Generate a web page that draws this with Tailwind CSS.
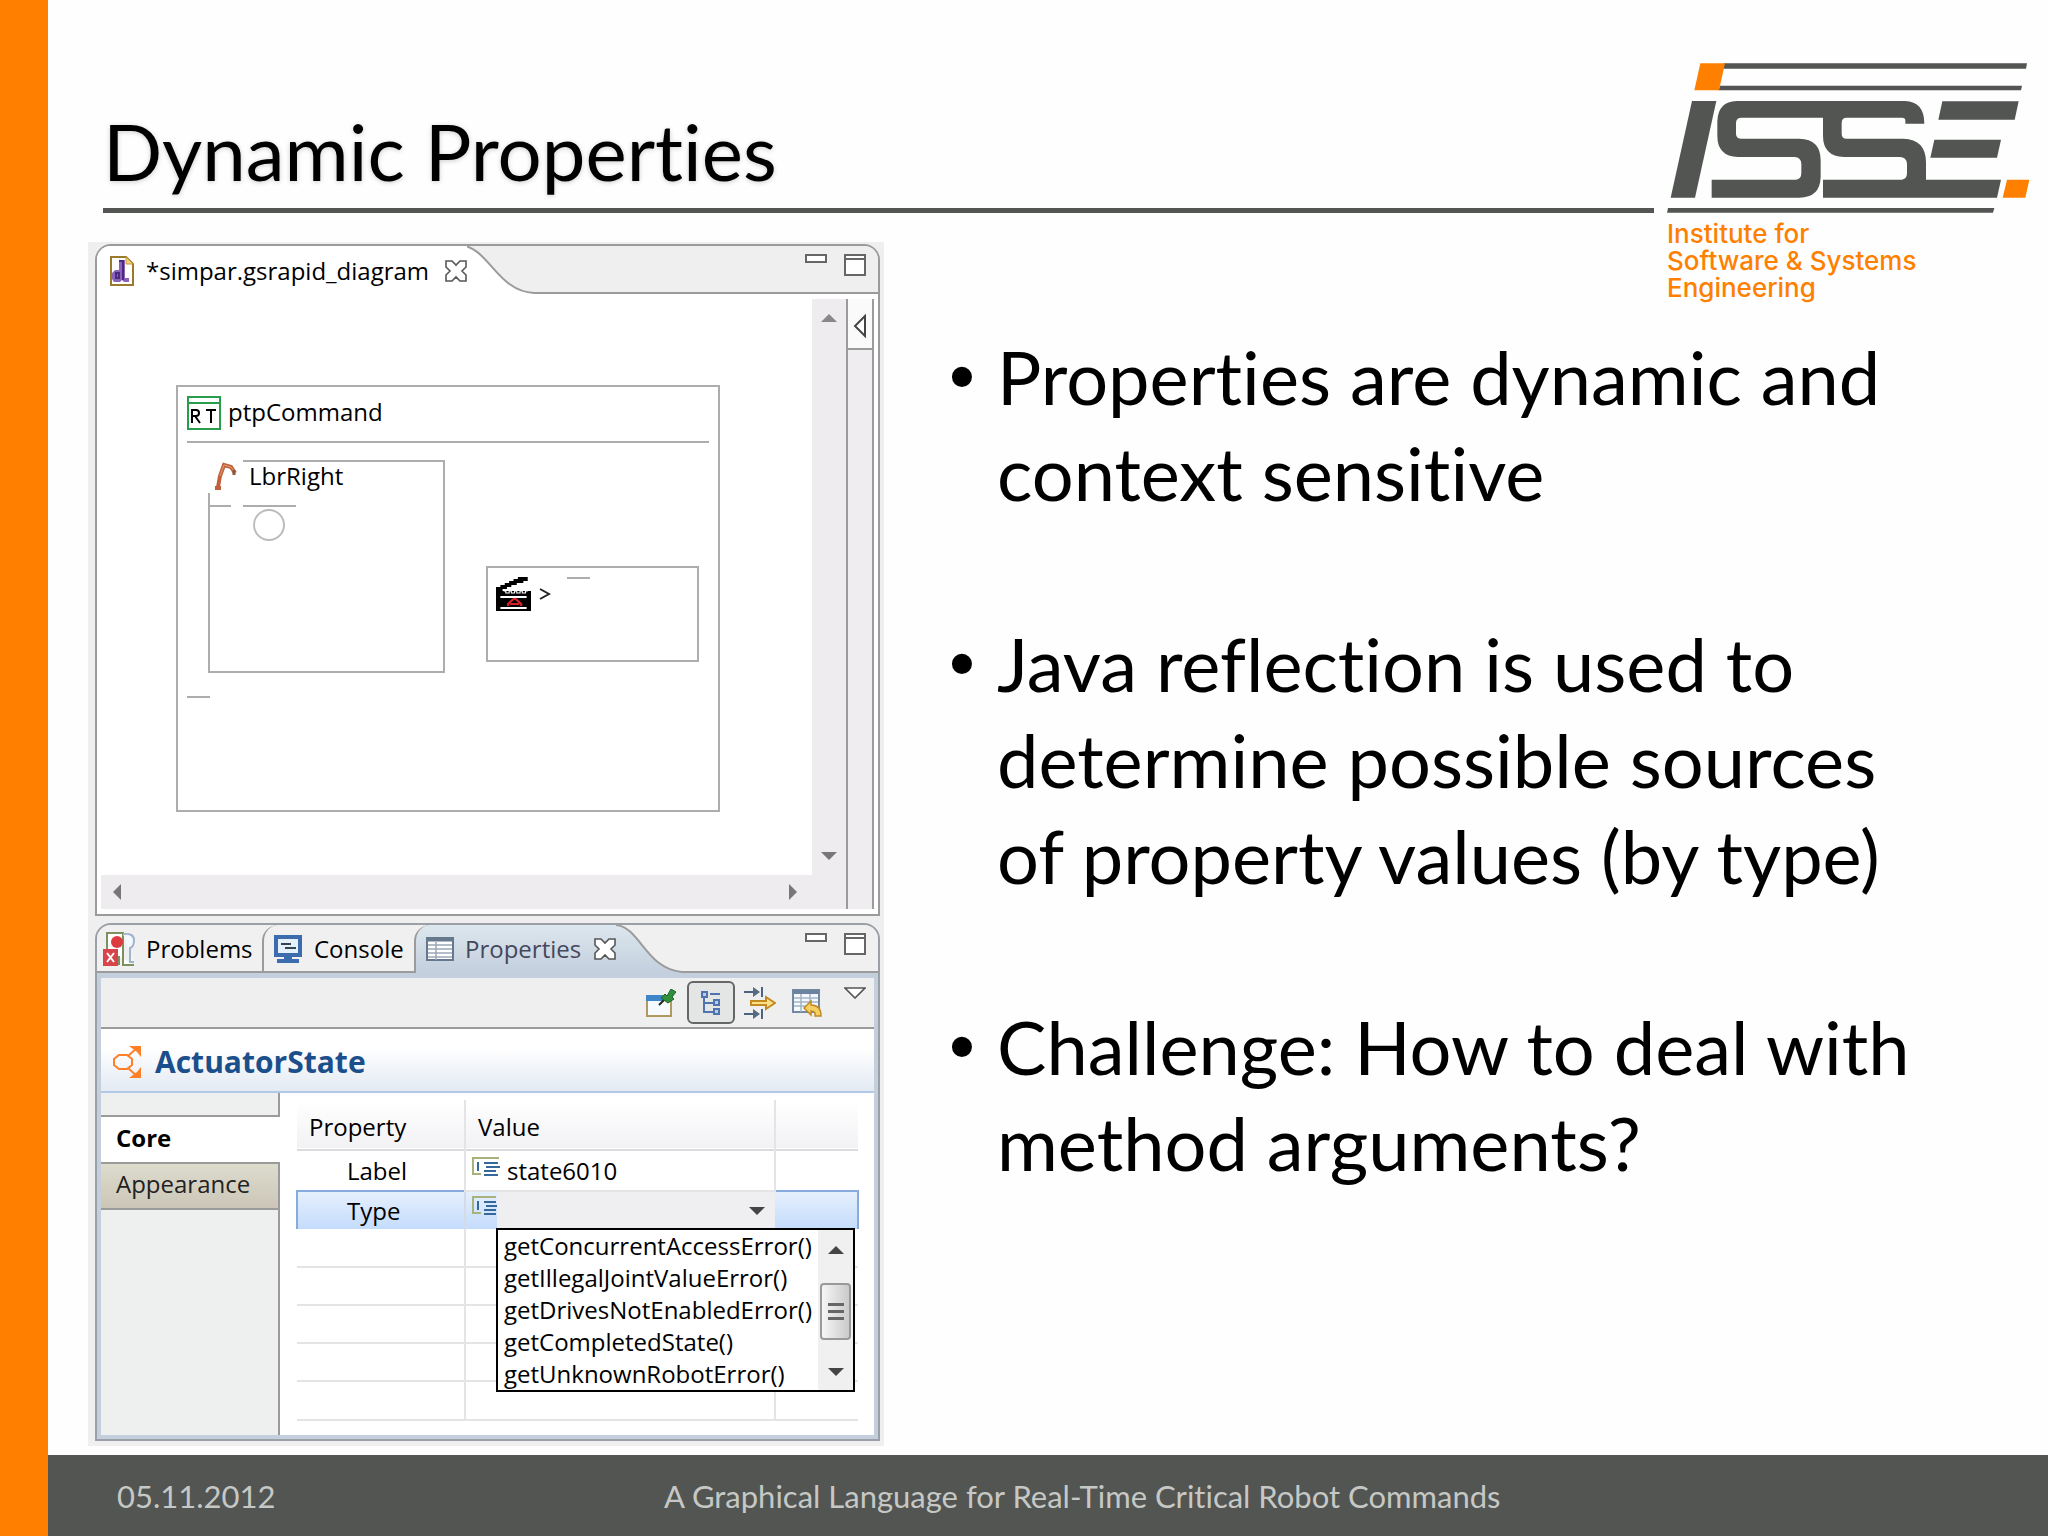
<!DOCTYPE html>
<html lang="en">
<head>
<meta charset="utf-8">
<title>Dynamic Properties</title>
<script src="https://cdn.jsdelivr.net/npm/@tailwindcss/browser@4"></script>
</head>
<body class="bg-[#fdfefd] text-black">
<div class="flex min-h-screen">
  <div class="w-12 shrink-0 bg-[#ff8000]"></div>
  <div class="flex min-w-0 flex-1 flex-col font-['Lato',sans-serif] [font-variant-ligatures:no-common-ligatures]">

    <!-- Title and institute mark -->
    <header class="flex items-end gap-3 pt-[63px] pr-[18px] pl-[55px]">
      <h1 class="min-w-0 flex-1 border-b-[5px] border-[#525551] pb-[10px] text-[78px] leading-[94px] whitespace-nowrap [text-shadow:0_1px_5px_#0003]">Dynamic Properties</h1>
      <svg class="h-[150px] w-[364px] shrink-0" viewBox="78 70 1092 450" role="img" aria-label="ISSE">
        <g fill="#525551">
          <path d="M250 71H1161L1158 87H246zM240 138H1146L1143 152H236zM84 505H1063L1059 519H81z"/>
          <path d="M156 184H229L165 474H92z"/>
          <path d="M290 184H795Q853 186 853 252H796V242Q796 234 786 234H620Q605 234 605 250V282Q605 297 620 297H790Q858 299 858 368V420H1083L1071 474H549V420H785Q801 418 801 400V372Q799 352 780 352H612Q549 350 549 288V234H305Q288 234 288 250V282Q288 297 305 297H478Q542 299 542 362V412Q540 474 478 474H215V420H468Q484 418 484 400V372Q482 352 464 352H294Q232 350 232 288V244Q234 186 290 184z"/>
          <path d="M907 185H1136L1124 240H895zM883 300H1083L1071 354H871z"/>
        </g>
        <path fill="#ff8000" d="M181 71H255L237 152H163zM1101 420H1168L1156 474H1088z"/>
      </svg>
    </header>

    <main class="grid flex-1 grid-cols-[796fr_1164fr] pl-10">
      <!-- Workbench -->
      <div class="mt-[29px] mb-[9px] flex min-w-0 flex-col gap-[7px] bg-[#efefef] pt-[2px] pr-1 pb-[5px] pl-[7px] font-['Open_Sans','Noto_Sans',sans-serif] text-2xl leading-8">

        <!-- Diagram editor -->
        <section class="flex h-[672px] flex-col overflow-hidden rounded-t-2xl border-2 border-[#9b9b9b] bg-white">
          <div class="flex h-12 shrink-0 bg-[#efefef]">
            <div class="flex items-center gap-3 bg-white pt-[2px] pl-[13px]">
              <svg class="h-[30px] w-6" viewBox="0 0 24 30"><path d="M1 1H16L23 8V29H1z" fill="#fff" stroke="#9c7a2c" stroke-width="2"/><path d="M16 1V8H23z" fill="#f0cf7e" stroke="#c79a3a"/><path d="M9 4H15V22H19V26H14L12 24L10 26H4L2 23V17L5 14H9V7z" fill="#8a62b8"/><path d="M9 5H13V24M6 17V22H9V17z" stroke="#4a2a80" stroke-width="2" fill="none"/></svg>
              <span>*simpar.gsrapid_diagram</span>
              <button aria-label="Close" class="ml-1"><svg class="h-[22px] w-[22px]" viewBox="0 0 22 22" fill="#fff" stroke="#555" stroke-width="1.6"><path d="M1 1H7L11 5L15 1H21V7L17 11L21 15V21H15L11 17L7 21H1V15L5 11L1 7z"/></svg></button>
            </div>
            <svg class="h-12 w-[67px]" viewBox="0 0 67 48"><path d="M0 0C22 6 30 44 67 47V48H0z" fill="#fff"/><path d="M-6 -1C22 2 30 45 67 47" fill="none" stroke="#9b9b9b" stroke-width="2"/></svg>
            <div class="flex flex-1 items-start justify-end gap-[17px] border-b-2 border-[#9b9b9b] pt-2 pr-3">
              <button aria-label="Minimize" class="h-[9px] w-[22px] border-2 border-[#666] bg-white"></button>
              <button aria-label="Maximize"><svg class="h-[22px] w-[22px]" viewBox="0 0 22 22"><path d="M1 1H21V21H1zM1 5H21" fill="#fff" stroke="#666" stroke-width="2"/></svg></button>
            </div>
          </div>

          <div class="flex min-h-0 flex-1 px-1 py-[5px]">
            <div class="flex min-w-0 flex-1 flex-col">
              <div class="flex min-h-0 flex-1">
                <!-- Free canvas -->
                <div class="relative min-w-0 flex-1">
                  <div class="absolute top-[86px] left-[75px] h-[427px] w-[544px] border-2 border-[#adadad]">
                    <div class="mx-[9px] flex h-[56px] items-start gap-[7px] border-b-2 border-[#adadad] pt-[9px]">
                      <svg class="h-[34px] w-[34px]" viewBox="0 0 34 34"><path d="M1 1H33V33H1zM1 7H33" fill="#fff" stroke="#2a9d4a" stroke-width="2"/><path d="M5 27V14H9Q12 14 12 17T9 20H5M8 20L13 27M19 14H29M24 14V27" fill="none" stroke="#000" stroke-width="2"/></svg>
                      <span>ptpCommand</span>
                    </div>
                    <div class="absolute top-[73px] left-[30px] h-[213px] w-[237px]">
                      <svg class="absolute inset-0 h-full w-full" viewBox="0 0 237 213" fill="none" stroke="#adadad" stroke-width="2"><path d="M35 1H236V212H1V33M1 46H23M35 46H88"/><ellipse cx="61" cy="65" rx="15" ry="15" stroke="#bbb"/></svg>
                      <div class="relative flex items-center gap-[10px] pl-[5px]">
                        <svg class="h-7 w-[26px]" viewBox="0 0 26 28" fill="none"><path d="M2 26H8M5 25L7 14L11 3L18 5L22 11" stroke="#c0603a" stroke-width="4"/><path d="M7 14L11 3L18 5L22 11" stroke="#e0a070" stroke-width="1"/><path d="M21 8v5" stroke="#8a5a40" stroke-width="3"/></svg>
                        <span>LbrRight</span>
                      </div>
                    </div>
                    <div class="absolute top-[179px] left-[308px] h-[96px] w-[213px] border-2 border-[#adadad]">
                      <div class="flex items-start gap-2 pt-[9px] pl-2">
                        <svg class="h-[34px] w-[35px]" viewBox="0 0 32 34" preserveAspectRatio="none"><path d="M0 10H4V8H8V6H12V4H16V2H20V0H29V4H25V6H19V8H14V10H10V12H6V14H32V34H0z"/><path d="M7 14h2v2h3v-2h2v2h3v-2h2v2h3v-2h2v2h3v-2h2" stroke="#fff" fill="none"/><path d="M4 20H28M4 31H28" stroke="#fff" stroke-width="2"/><path d="M11 29V27L16 22H18L23 27V29M13 27H21" fill="none" stroke="#d8202a" stroke-width="2"/></svg>
                        <svg class="mt-[11px] h-3 w-3" viewBox="0 0 12 12" fill="none" stroke="#222" stroke-width="2" role="img" aria-label="&gt;"><path d="M1 1L10 6L1 11"/></svg>
                      </div>
                      <div class="absolute top-[9px] left-[79px] h-[2px] w-[23px] bg-[#adadad]"></div>
                    </div>
                    <div class="absolute top-[309px] left-[9px] h-[2px] w-[23px] bg-[#adadad]"></div>
                  </div>
                </div>
                <div class="flex w-[34px] flex-col items-center justify-between bg-[#eeecef] py-[15px]">
                  <svg class="h-2 w-4" viewBox="0 0 16 8"><path d="M8 0L16 8H0z" fill="#888"/></svg>
                  <svg class="h-2 w-4" viewBox="0 0 16 8"><path d="M0 0H16L8 8z" fill="#777"/></svg>
                </div>
              </div>
              <div class="flex h-[34px] shrink-0 items-center justify-between bg-[#eeecef] pr-[49px] pl-3">
                <svg class="h-4 w-2" viewBox="0 0 8 16"><path d="M8 0V16L0 8z" fill="#777"/></svg>
                <svg class="h-4 w-2" viewBox="0 0 8 16"><path d="M0 0V16L8 8z" fill="#777"/></svg>
              </div>
            </div>
            <div class="w-7 border-x-2 border-[#9b9b9b] bg-[#efedf0]">
              <button aria-label="Show palette" class="flex h-[51px] w-full items-center justify-center border-b-2 border-[#9b9b9b] bg-[#fafafa] pt-1"><svg class="h-6 w-[14px]" viewBox="0 0 14 24"><path d="M12 2V22L2 12z" fill="#fff" stroke="#444" stroke-width="2"/></svg></button>
            </div>
          </div>
        </section>

        <!-- Properties view -->
        <section class="flex h-[518px] flex-col overflow-hidden rounded-t-2xl border-2 border-[#9b9fa6] bg-[#c3cfdd]">
          <div class="flex h-12 shrink-0 bg-[#f1f0f1]">
            <button class="flex w-[165px] items-center gap-[11px] border-b-2 border-[#9b9b9b] pt-[2px] pl-[6px]">
              <svg class="h-[34px] w-8 shrink-0" viewBox="0 0 32 34"><path d="M4 17V1H20V33H31M16 24V33" fill="#fff" stroke="#7d9160" stroke-width="2"/><path d="M20 2Q31 1 31 8Q31 15 27 16V30H31" fill="#f4f8fc" stroke="#9db4cc" stroke-width="2"/><circle cx="14" cy="10" r="6" fill="#dd3b40"/><path d="M0 17H15V34H0z" fill="#d8444b"/><path d="M4 21L11 30M11 21L4 30" stroke="#fff" stroke-width="2"/></svg>
              <span>Problems</span>
            </button>
            <button class="flex w-[152px] items-center gap-3 rounded-tl-2xl border-b-2 border-l-2 border-[#9b9b9b] pt-[2px] pl-[10px]">
              <svg class="h-7 w-7 shrink-0" viewBox="0 0 28 28"><path d="M0 0H28V22H18V24H25V28H3V24H10V22H0z" fill="#3a6cae"/><path d="M4 4H24V18H4z" fill="#e6f0fa"/><path d="M7 9H17M11 13H22" stroke="#345" stroke-width="2"/></svg>
              <span>Console</span>
            </button>
            <div class="flex items-center gap-[11px] rounded-tl-2xl border-l-2 border-[#9b9b9b] bg-linear-to-b from-[#dce7ee] to-[#c3cfdd] pl-[10px] text-[#45485c]">
              <svg class="h-6 w-7" viewBox="0 0 28 24"><path d="M1 1H27V23H1z" fill="#fff" stroke="#66788e" stroke-width="2"/><path d="M1 3H27" stroke="#66788e" stroke-width="3"/><path d="M2 8H26M2 12H26M2 16H26M2 20H26M10 5V23" stroke="#9aa8b8" stroke-width="1.5"/></svg>
              <span>Properties</span>
              <button aria-label="Close" class="ml-[2px]"><svg class="h-[22px] w-[22px]" viewBox="0 0 22 22" fill="#fff" stroke="#555" stroke-width="1.6"><path d="M1 1H7L11 5L15 1H21V7L17 11L21 15V21H15L11 17L7 21H1V15L5 11L1 7z"/></svg></button>
            </div>
            <svg class="h-12 w-[66px]" viewBox="0 0 66 48" preserveAspectRatio="none"><defs><linearGradient id="tab" x2="0" y2="1"><stop stop-color="#dce7ee"/><stop offset="1" stop-color="#c3cfdd"/></linearGradient></defs><path d="M0 0C24 2 30 44 66 47V48H0z" fill="url(#tab)"/><path d="M0 0C24 2 30 44 66 47" fill="none" stroke="#9b9b9b" stroke-width="2"/></svg>
            <div class="flex flex-1 items-start justify-end gap-[17px] border-b-2 border-[#9b9b9b] pt-2 pr-3">
              <button aria-label="Minimize" class="h-[9px] w-[22px] border-2 border-[#666] bg-white"></button>
              <button aria-label="Maximize"><svg class="h-[22px] w-[22px]" viewBox="0 0 22 22"><path d="M1 1H21V21H1zM1 5H21" fill="#fff" stroke="#666" stroke-width="2"/></svg></button>
            </div>
          </div>

          <div class="mx-1 mt-[5px] mb-1 flex min-h-0 flex-1 flex-col bg-white">
            <!-- View toolbar -->
            <div class="flex h-[51px] shrink-0 items-center justify-end border-b-2 border-[#9b9b9b] bg-[#efefef] pr-2">
              <button aria-label="Pin" class="mr-[11px]"><svg class="h-7 w-[30px]" viewBox="0 0 30 28"><path d="M1 7H25V27H1z" fill="#f4faff" stroke="#b09a60" stroke-width="2"/><path d="M0 6H18V12H0z" fill="#3f86c8"/><path d="M13 16L20 9" stroke="#222" stroke-width="2"/><path d="M15 9L19 5L21 7L25 0L30 3L26 8L28 10L22 14z" fill="#2f8f3a" stroke="#1c6428"/></svg></button>
              <button aria-label="Show categories" class="mr-[9px] flex h-[43px] w-12 items-center justify-center rounded-md border-2 border-[#666] bg-[#e4e5e5]"><svg class="h-6 w-5" viewBox="0 0 20 24" fill="#b9cdea" stroke="#4f74b0" stroke-width="2"><path fill="none" d="M3 5V21H14M3 12H14M9 3H19"/><path d="M1 1H6V6H1zM13 9H18V14H13zM13 18H18V23H13z"/></svg></button>
              <button aria-label="Show advanced properties" class="mr-4"><svg class="h-8 w-8" viewBox="0 0 32 32"><path d="M0 5H12M0 27H12M18 0V10M18 22V32" stroke="#4a6484" stroke-width="2"/><path d="M9 0L16 5L9 10zM9 22L16 27L9 32z" fill="#556b80"/><path d="M7 14H22V10L31 16L22 22V18H7z" fill="#fbe08a" stroke="#c48a1e" stroke-width="2"/></svg></button>
              <button aria-label="Restore default value" class="mr-[21px]"><svg class="h-7 w-[31px]" viewBox="0 0 31 28"><path d="M1 1H27V23H1z" fill="#f5f9fd" stroke="#7488a2" stroke-width="2"/><path d="M1 3H27" stroke="#6c83a0" stroke-width="4"/><path d="M2 9H26M2 13H26M2 17H20M9 5V23M18 5V12" stroke="#a4b4c6" stroke-width="1.5"/><path d="M12 19L19 12V16Q29 16 29 27H23Q24 22 19 22V26z" fill="#f6cf62" stroke="#c08a22" stroke-width="1.5"/></svg></button>
              <button aria-label="View menu" class="mb-5"><svg class="h-3 w-[22px]" viewBox="0 0 22 12"><path d="M1 1H21L11 11z" fill="#fff" stroke="#555" stroke-width="1.6"/></svg></button>
            </div>
            <div class="flex h-16 shrink-0 items-center gap-[14px] border-b-2 border-[#b3c7e6] bg-linear-to-b from-white from-30% to-[#e3eaf3] pt-[3px] pl-[10px]">
              <svg class="h-8 w-[30px]" viewBox="0 0 30 32" fill="none" stroke="#ff8028" stroke-width="2"><path d="M8 9H16L21 13V19L16 23H8L3 19V13z"/><path d="M17 10L27 1M17 22L27 31"/><path d="M18 0H30V11L26 6zM18 32H30V21L26 26z" fill="#ff8028" stroke="none"/></svg>
              <h2 class="text-3xl leading-8 font-bold text-[#1b4f8c]">ActuatorState</h2>
            </div>
            <div class="flex min-h-0 flex-1">
              <nav class="flex w-[179px] shrink-0 flex-col bg-[#eef0ef]">
                <div class="h-6 border-r-2 border-b-2 border-[#9b9b9b]"></div>
                <a href="#core" class="flex h-[45px] items-center bg-white pb-1 pl-[15px] font-bold">Core</a>
                <a href="#appearance" class="flex h-12 items-center border-y-2 border-r-2 border-[#9b9b9b] bg-linear-to-b from-[#dddccd] to-[#cbc6b8] pb-1 pl-[15px] text-[#222]">Appearance</a>
                <div class="flex-1 border-r-2 border-[#9b9b9b]"></div>
              </nav>
              <div class="min-w-0 flex-1 pt-[7px] pr-[15px] pl-4">
                <table class="w-full table-fixed border-collapse text-left">
                  <colgroup><col class="w-[168px]"><col><col class="w-[83px]"></colgroup>
                  <thead>
                    <tr class="h-[50px] border-b-2 border-[#dadadf] bg-linear-to-b from-white to-[#f2f2f5]">
                      <th class="border-r-2 border-[#e4e4e6] p-0 pt-1 pl-3 font-normal">Property</th>
                      <th class="border-r-2 border-[#e4e4e6] p-0 pt-1 pl-3 font-normal">Value</th>
                      <th class="p-0"></th>
                    </tr>
                  </thead>
                  <tbody>
                    <tr class="h-[41px] border-b-2 border-[#e4e4e6]">
                      <td class="border-r-2 border-[#e4e4e6] p-0 pl-[50px]">Label</td>
                      <td class="border-r-2 border-[#e4e4e6] p-0 pl-[6px]">
                        <span class="flex items-center gap-[7px]"><svg class="mb-2 h-5 w-7" viewBox="0 0 28 20" fill="none" stroke-width="2"><path d="M9 17H1V1H27" stroke="#a9b27c"/><path d="M6 5V14M12 6H26M14 10H28M12 14H24M12 18H26" stroke="#35699c"/></svg>state6010</span>
                      </td>
                      <td class="p-0"></td>
                    </tr>
                    <tr class="h-[37px] bg-linear-to-b from-[#e6f0fd] to-[#c4dcfc]">
                      <td class="border-t-2 border-r-2 border-l-2 border-[#86abdc] border-r-[#d4dbe6] p-0 pl-[49px]"><label for="type">Type</label></td>
                      <td class="p-0">
                        <div class="relative flex h-[37px] pl-[6px]">
                          <svg class="mt-1 h-5 w-[25px]" viewBox="0 0 25 20" fill="none" stroke-width="2"><path d="M9 17H1V1H24" stroke="#a9b27c"/><path d="M6 5V14M12 6H24M14 10H25M12 14H24M12 18H24" stroke="#35699c"/></svg>
                          <select id="type" class="min-w-0 flex-1 appearance-none bg-[#efeff1]"><option></option></select>
                          <svg class="pointer-events-none absolute top-[15px] right-[10px] h-2 w-4" viewBox="0 0 16 8"><path d="M0 0H16L8 8z" fill="#444"/></svg>
                          <!-- Open drop-down list -->
                          <div class="absolute top-[36px] left-[30px] z-10 flex h-[164px] w-[359px] border-2 border-black bg-white">
                            <ul role="listbox" aria-label="Type" class="flex-1 pl-[6px] whitespace-nowrap">
                              <li role="option">getConcurrentAccessError()</li>
                              <li role="option">getIllegalJointValueError()</li>
                              <li role="option">getDrivesNotEnabledError()</li>
                              <li role="option">getCompletedState()</li>
                              <li role="option">getUnknownRobotError()</li>
                            </ul>
                            <div class="flex w-[35px] shrink-0 flex-col items-center justify-between bg-[#f0f0f1] pt-4 pb-[14px]">
                              <svg class="h-2 w-4" viewBox="0 0 16 8"><path d="M8 0L16 8H0z" fill="#444"/></svg>
                              <div class="flex h-[57px] w-[31px] flex-col items-center justify-center gap-1 rounded-sm border-2 border-[#999] bg-linear-to-r from-[#f6f6f6] to-[#cacaca]"><span class="h-[3px] w-4 bg-[#666]"></span><span class="h-[3px] w-4 bg-[#666]"></span><span class="h-[3px] w-4 bg-[#666]"></span></div>
                              <svg class="h-2 w-4" viewBox="0 0 16 8"><path d="M0 0H16L8 8z" fill="#444"/></svg>
                            </div>
                          </div>
                        </div>
                      </td>
                      <td class="border-t-2 border-r-2 border-[#86abdc] p-0"></td>
                    </tr>
                    <tr class="h-[38px] border-b-2 border-[#e4e4e6]"><td class="border-r-2 border-[#e4e4e6]"></td><td class="border-r-2 border-[#e4e4e6]"></td><td></td></tr>
                    <tr class="h-[38px] border-b-2 border-[#e4e4e6]"><td class="border-r-2 border-[#e4e4e6]"></td><td class="border-r-2 border-[#e4e4e6]"></td><td></td></tr>
                    <tr class="h-[38px] border-b-2 border-[#e4e4e6]"><td class="border-r-2 border-[#e4e4e6]"></td><td class="border-r-2 border-[#e4e4e6]"></td><td></td></tr>
                    <tr class="h-[38px] border-b-2 border-[#e4e4e6]"><td class="border-r-2 border-[#e4e4e6]"></td><td class="border-r-2 border-[#e4e4e6]"></td><td></td></tr>
                    <tr class="h-[39px] border-b-2 border-[#e4e4e6]"><td class="border-r-2 border-[#e4e4e6]"></td><td class="border-r-2 border-[#e4e4e6]"></td><td></td></tr>
                  </tbody>
                </table>
              </div>
            </div>
          </div>
        </section>
      </div>

      <div class="flex min-w-0 flex-col">
        <p class="ml-auto w-[381px] pt-[7px] font-['Inter',sans-serif] text-[26px] leading-[27px] font-medium text-[#ff8000]">Institute for<br>Software &amp; Systems<br>Engineering</p>
        <ul class="flex flex-col gap-[95px] pt-7 pr-[120px] pl-[65px] text-[74px] leading-[96px]">
          <li class="flex"><span class="w-12 shrink-0 font-['Liberation_Sans',sans-serif]">•</span><span>Properties are dynamic and context sensitive</span></li>
          <li class="flex"><span class="w-12 shrink-0 font-['Liberation_Sans',sans-serif]">•</span><span>Java reflection is used to determine possible sources of property values (by type)</span></li>
          <li class="flex"><span class="w-12 shrink-0 font-['Liberation_Sans',sans-serif]">•</span><span>Challenge: How to deal with method arguments?</span></li>
        </ul>
      </div>
    </main>

    <footer class="grid h-[81px] grid-cols-[547fr_1384fr] items-center bg-[#525551] pl-[69px] text-[31px] leading-9 text-[#c6c8c6]">
      <span>05.11.2012</span>
      <span>A Graphical Language for Real-Time Critical Robot Commands</span>
    </footer>
  </div>
</div>
</body>
</html>
